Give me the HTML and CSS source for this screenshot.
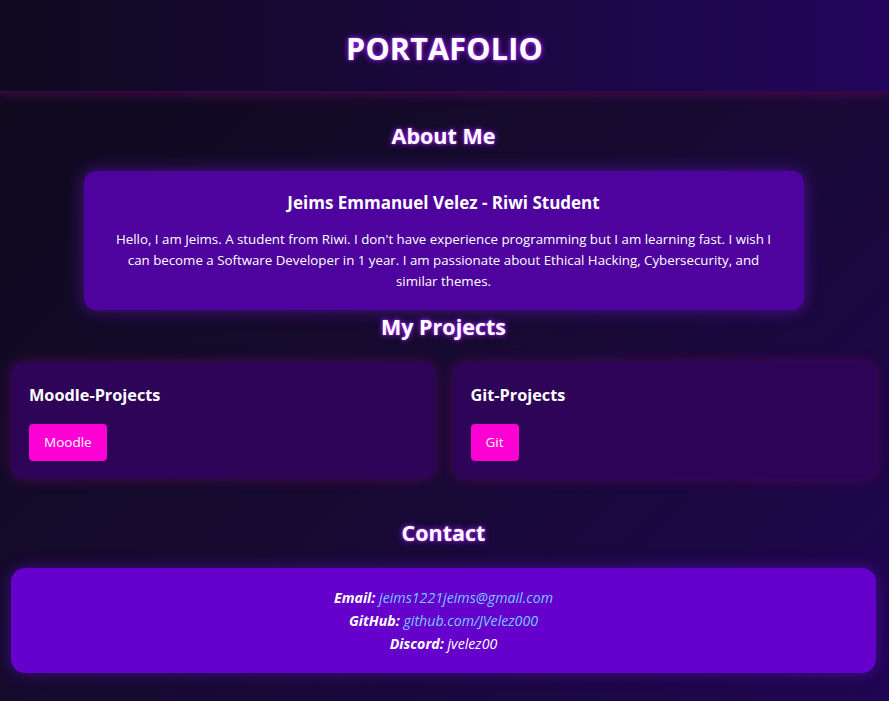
FILE: index.html
```html
<!DOCTYPE html>
<html lang="en">
<head>
<meta charset="utf-8">
<title>Portafolio</title>
<link rel="stylesheet" href="styles.css">
</head>
<body>
<header class="site-header">
  <h1 class="site-title">PORTAFOLIO</h1>
</header>
<main class="content">
  <section class="about">
    <h2 class="section-title">About Me</h2>
    <div class="about-card">
      <h3 class="about-name">Jeims Emmanuel Velez - Riwi Student</h3>
      <p class="about-text">Hello, I am Jeims. A student from Riwi. I don't have experience programming but I am learning fast. I wish I can become a Software Developer in 1 year. I am passionate about Ethical Hacking, Cybersecurity, and similar themes.</p>
    </div>
  </section>
  <section class="projects">
    <h2 class="section-title">My Projects</h2>
    <div class="project-grid">
      <div class="project-card">
        <h3 class="project-title">Moodle-Projects</h3>
        <a class="project-btn" href="#">Moodle</a>
      </div>
      <div class="project-card">
        <h3 class="project-title">Git-Projects</h3>
        <a class="project-btn" href="#">Git</a>
      </div>
    </div>
  </section>
  <section class="contact">
    <h2 class="section-title">Contact</h2>
    <div class="contact-card">
      <p class="contact-line"><strong>Email:</strong> <a class="contact-link" href="#">jeims1221jeims@gmail.com</a></p>
      <p class="contact-line"><strong>GitHub:</strong> <a class="contact-link" href="#">github.com/JVelez000</a></p>
      <p class="contact-line"><strong>Discord:</strong> jvelez00</p>
    </div>
  </section>
</main>
</body>
</html>
```
FILE: styles.css
```css
html, body {
  margin: 0;
  padding: 0;
}
body {
  min-height: 701px;
  font-family: "Open Sans", "Noto Sans", sans-serif;
  color: #ffffff;
  background: linear-gradient(135deg, #0f0a1c 0%, #160a30 50%, #200552 100%);
}
.site-header {
  height: 91px;
  display: flex;
  align-items: center;
  justify-content: center;
  background: linear-gradient(90deg, #100a20 0%, #1a073f 55%, #23065c 100%);
  border-bottom: 2px solid #33093f;
  box-shadow: 0 3px 10px rgba(255, 0, 200, 0.18);
}
.site-title {
  margin: 4px 0 0;
  font-size: 30.5px;
  font-weight: 700;
  letter-spacing: 0.2px;
  text-shadow: 0 0 6px #a020ff, 0 0 2px #c040ff;
}
.content {
  padding: 28px 13px 0 11px;
}
.section-title {
  margin: 0 0 20px;
  text-align: center;
  font-size: 21.5px;
  line-height: 30px;
  font-weight: 700;
  text-shadow: 0 0 6px #a020ff, 0 0 2px #c040ff;
}
.about-card {
  max-width: 668px;
  margin: 0 auto;
  padding: 20px 26px 18px;
  border-radius: 12px;
  background: #4f039e;
  box-shadow: 0 0 18px rgba(140, 30, 255, 0.45);
  text-align: center;
}
.about-name {
  margin: 0 0 14px;
  font-size: 17px;
  line-height: 24px;
  font-weight: 700;
}
.about-text {
  margin: 0;
  font-size: 13.3px;
  line-height: 21px;
}
.projects {
  margin-top: 2px;
}
.project-grid {
  display: grid;
  grid-template-columns: 1fr 1fr;
  gap: 18px;
}
.project-card {
  padding: 18px;
  border-radius: 12px;
  background: #2e0459;
  box-shadow: 0 0 14px rgba(255, 0, 190, 0.22);
}
.project-title {
  margin: 3px 0 17px;
  font-size: 16.3px;
  line-height: 24px;
  font-weight: 700;
}
.project-btn {
  display: inline-block;
  padding: 0 15px;
  height: 37px;
  line-height: 37px;
  border-radius: 4px;
  background: #ff00d4;
  color: #ffffff;
  font-size: 13.5px;
  text-decoration: none;
}
.contact {
  margin-top: 39px;
}
.contact-card {
  padding: 18px;
  border-radius: 14px;
  background: #6600cc;
  box-shadow: 0 0 16px rgba(130, 20, 255, 0.4);
  text-align: center;
}
.contact-line {
  margin: 0;
  font-size: 14.2px;
  line-height: 23px;
  font-style: italic;
}
.contact-line strong {
  font-weight: 700;
}
.contact-link {
  color: #72c8ff;
  text-decoration: none;
}
```
